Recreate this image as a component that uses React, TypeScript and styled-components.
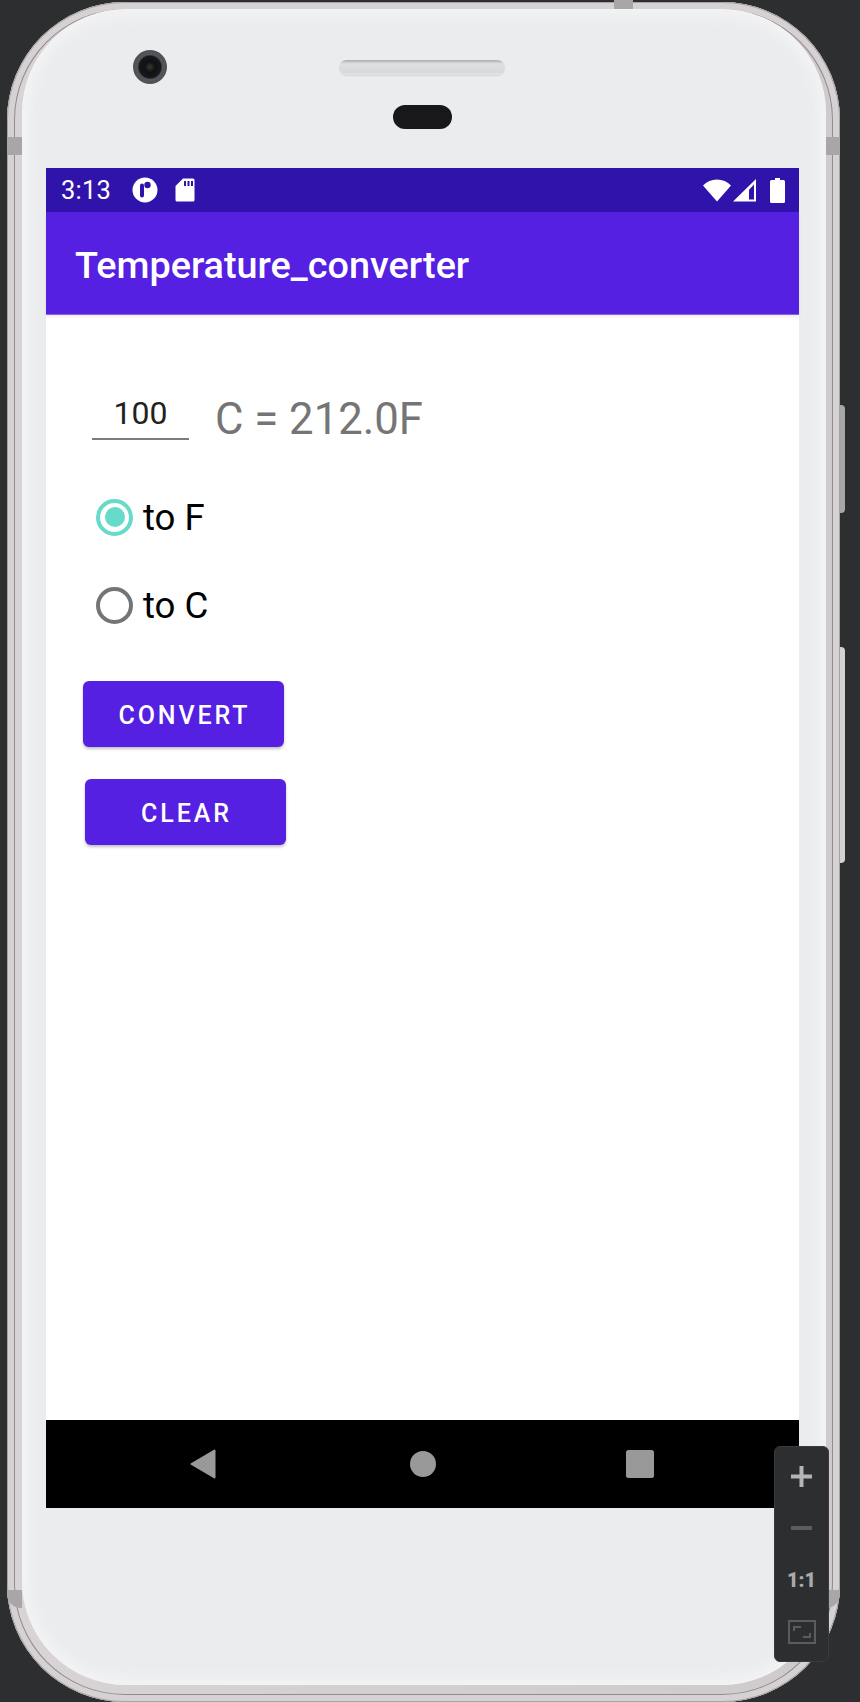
import * as React from "react";
import styled, { createGlobalStyle } from "styled-components";

const GlobalStyle = createGlobalStyle`
  html, body {
    margin: 0;
    padding: 0;
    background: #2d2e30;
    font-family: Roboto, "Liberation Sans", sans-serif;
  }
`;

const Page = styled.div`
  position: relative;
  width: 860px;
  height: 1702px;
  overflow: hidden;
  background: #2d2e30;
  padding: 2px 0 0 7px;
  box-sizing: border-box;
`;

const Device = styled.div`
  position: relative;
  width: 833px;
  height: 1700px;
  box-sizing: border-box;
  padding: 7px 14px 17px 15px;
  border-radius: 118px;
  background: linear-gradient(90deg, #b9b4b6 0, #d8d4d5 1%, #cfcacc 99%, #a9a5a7 100%);
  box-shadow: inset 0 0 0 1px #a7a3a5, inset 0 0 0 7px #d6d2d3, inset 0 0 0 8px #8f8c8e;
`;

const Band = styled.div<{ $side: "left" | "right"; $top: number; $low?: boolean }>`
  position: absolute;
  ${(p) => p.$side}: 0;
  top: ${(p) => p.$top}px;
  width: 15px;
  height: 18px;
  background: #a9a6a8;
  border-radius: ${(p) => (p.$low ? (p.$side === "left" ? "0 0 0 14px" : "0 0 14px 0") : "0")};
`;

const TopBand = styled.div`
  position: absolute;
  left: 607px;
  top: -2px;
  width: 19px;
  height: 9px;
  background: #a9a6a8;
`;

const SideKey = styled.div<{ $top: number; $height: number; $light?: boolean }>`
  position: absolute;
  left: 833px;
  top: ${(p) => p.$top}px;
  width: 5px;
  height: ${(p) => p.$height}px;
  border-radius: 0 4px 4px 0;
  background: ${(p) => (p.$light ? "#d3d1d2" : "#a8a7a8")};
`;

const Bezel = styled.div`
  position: relative;
  height: 100%;
  box-sizing: border-box;
  padding: 0 0 0 24px;
  border-radius: 104px;
  background: #ebecee;
  box-shadow: inset 0 0 16px 5px #f5f5f7;
`;

const TopBezel = styled.div`
  height: 159px;
  display: flex;
  flex-direction: column;
`;

const TopRow = styled.div`
  display: flex;
  align-items: center;
  height: 34px;
  margin-top: 41px;
  padding-left: 87px;
`;

const Camera = styled.div`
  width: 34px;
  height: 34px;
  border-radius: 50%;
  background: radial-gradient(circle at 50% 50%, #3b3a2a 0, #101114 22%, #17181b 45%, #55565a 52%, #45464a 100%);
`;

const Speaker = styled.div`
  width: 166px;
  height: 15px;
  margin-left: 172px;
  border-radius: 8px;
  background: linear-gradient(#a9abae 0, #dfe0e2 25%, #d8d9db 80%, #e3e4e6 100%);
  box-shadow: 0 1px 1px #d5d6d8;
`;

const Sensor = styled.div`
  width: 59px;
  height: 24px;
  margin: 21px 0 0 347px;
  border-radius: 12px;
  background: #18181b;
`;

const Screen = styled.div`
  width: 753px;
  height: 1340px;
  display: flex;
  flex-direction: column;
  background: #fff;
`;

const StatusBar = styled.div`
  height: 44px;
  flex: none;
  display: flex;
  align-items: center;
  padding: 0 14px 0 15px;
  background: #3013aa;
  color: #fff;
`;

const Clock = styled.span`
  font-size: 25.5px;
  width: 71px;
  letter-spacing: 0.2px;
`;

const StatusIcon = styled.svg<{ $gap?: number }>`
  display: block;
  flex: none;
  margin-left: ${(p) => p.$gap ?? 0}px;
`;

const Spring = styled.div`
  flex: 1;
`;

const AppBar = styled.header`
  position: relative;
  height: 103px;
  flex: none;
  display: flex;
  align-items: center;
  padding: 3px 0 0 29px;
  background: #5520e2;
  border-bottom: 1px solid #8a63e8;
  box-sizing: border-box;
  box-shadow: 0 2px 3px rgba(0, 0, 0, 0.08);
  color: #fff;
  font-size: 37.8px;
  font-weight: 500;
`;

const Content = styled.main`
  flex: 1;
  padding: 0 0 0 36px;
`;

const ConvertRow = styled.div`
  display: flex;
  align-items: flex-end;
  height: 125px;
  margin-left: 10px;
`;

const DegreeInput = styled.div`
  width: 97px;
  height: 52px;
  box-sizing: border-box;
  border-bottom: 2px solid #7b7b7b;
  text-align: center;
  color: #222;
  font-size: 32px;
  line-height: 51px;
`;

const Result = styled.div`
  margin-left: 26px;
  color: #757575;
  font-size: 43.7px;
  line-height: 52px;
  height: 52px;
  position: relative;
  top: 5px;
`;

const RadioRow = styled.label<{ $first?: boolean }>`
  display: flex;
  align-items: center;
  height: 44px;
  margin: ${(p) => (p.$first ? "55px" : "44px")} 0 0 14px;
  color: #000;
  font-size: 36.6px;
`;

const RadioMark = styled.span<{ $on?: boolean }>`
  width: 37px;
  height: 37px;
  box-sizing: border-box;
  border-radius: 50%;
  border: 4.5px solid ${(p) => (p.$on ? "#66dbc9" : "#757575")};
  display: flex;
  align-items: center;
  justify-content: center;
  margin-right: 10px;
  &::after {
    content: "";
    display: ${(p) => (p.$on ? "block" : "none")};
    width: 20px;
    height: 20px;
    border-radius: 50%;
    background: #66dbc9;
  }
`;

const ActionButton = styled.button<{ $offset: number; $top: number }>`
  display: block;
  width: 201px;
  height: 66px;
  margin: ${(p) => p.$top}px 0 0 ${(p) => p.$offset}px;
  padding: 3px 0 0 2px;
  border: 0;
  border-radius: 6px;
  background: #5520e2;
  color: #fff;
  font-family: inherit;
  font-size: 25px;
  font-weight: 500;
  letter-spacing: 2.9px;
  box-shadow: 0 2px 3px rgba(0, 0, 0, 0.25);
`;

const NavBar = styled.nav`
  height: 88px;
  flex: none;
  display: flex;
  align-items: center;
  padding-left: 144px;
  background: #000;
`;

const NavIcon = styled.svg<{ $gap?: number }>`
  display: block;
  flex: none;
  margin-left: ${(p) => p.$gap ?? 0}px;
`;

const ZoomPanel = styled.div`
  position: absolute;
  left: 774px;
  top: 1446px;
  width: 55px;
  height: 216px;
  box-sizing: border-box;
  padding-top: 3px;
  display: flex;
  flex-direction: column;
  align-items: center;
  border: 1px solid #3a3b3d;
  border-radius: 6px;
  background: #2d2e30;
`;

const ZoomSlot = styled.div`
  height: 52px;
  display: flex;
  align-items: center;
  justify-content: center;
  color: #aaaaab;
  font-size: 20px;
  font-weight: 900;
  flex: none;
`;

const App = () => (
  <Page>
    <GlobalStyle />
    <Device>
      <Band $side="left" $top={135} />
      <Band $side="right" $top={135} />
      <Band $side="left" $top={1588} $low />
      <Band $side="right" $top={1588} $low />
      <TopBand />
      <SideKey $top={403} $height={108} />
      <SideKey $top={645} $height={216} $light />
      <Bezel>
        <TopBezel>
          <TopRow>
            <Camera />
            <Speaker />
          </TopRow>
          <Sensor />
        </TopBezel>
        <Screen>
          <StatusBar>
            <Clock>3:13</Clock>
            <StatusIcon width="26" height="26" viewBox="0 0 26 26">
              <circle cx="13" cy="13" r="12.5" fill="#fff" />
              <rect x="8" y="6.500" width="4" height="14" rx="2" fill="#3013aa" />
              <circle cx="15.500" cy="8" r="3.200" fill="#3013aa" />
            </StatusIcon>
            <StatusIcon $gap={17} width="20" height="24" viewBox="0 0 20 24">
              <path d="M8 0.500h10a1.500 1.500 0 0 1 1.500 1.500v20a1.500 1.500 0 0 1-1.500 1.500H2A1.500 1.500 0 0 1 .5 22V8z" fill="#fff" />
              <path d="M9 3h2v5H9zM12.500 3h2v5h-2zM16 3h2v5h-2z" fill="#3013aa" />
            </StatusIcon>
            <Spring />
            <StatusIcon width="28" height="23" viewBox="0 0 28 23">
              <path d="M0 6.500C3.600 2.600 8.600 .5 14 .5s10.400 2.100 14 6L14 22.500z" fill="#fff" />
            </StatusIcon>
            <StatusIcon $gap={2} width="23" height="23" viewBox="0 0 23 23">
              <path fillRule="evenodd" d="M23 0v22.500H0zM21 5.500l-5 5.200V20.500h5z" fill="#fff" />
            </StatusIcon>
            <StatusIcon $gap={14} width="15" height="25" viewBox="0 0 15 25">
              <path d="M5 0h5v2h3.500A1.500 1.500 0 0 1 15 3.500V23.500a1.500 1.500 0 0 1-1.500 1.500H1.500A1.500 1.500 0 0 1 0 23.500V3.500A1.500 1.500 0 0 1 1.500 2H5z" fill="#fff" />
            </StatusIcon>
          </StatusBar>
          <AppBar>Temperature_converter</AppBar>
          <Content>
            <ConvertRow>
              <DegreeInput>100</DegreeInput>
              <Result>C = 212.0F</Result>
            </ConvertRow>
            <RadioRow $first>
              <RadioMark $on />
              to F
            </RadioRow>
            <RadioRow>
              <RadioMark />
              to C
            </RadioRow>
            <ActionButton $top={54} $offset={1}>CONVERT</ActionButton>
            <ActionButton $top={32} $offset={3}>CLEAR</ActionButton>
          </Content>
          <NavBar>
            <NavIcon width="26" height="30" viewBox="0 0 26 30">
              <path d="M24.500 1.500v27L1.500 15z" fill="#999" stroke="#999" strokeWidth="2" strokeLinejoin="round" />
            </NavIcon>
            <NavIcon $gap={194} width="26" height="26" viewBox="0 0 26 26">
              <circle cx="13" cy="13" r="13" fill="#999" />
            </NavIcon>
            <NavIcon $gap={190} width="28" height="28" viewBox="0 0 28 28">
              <rect width="28" height="28" rx="2.500" fill="#999" />
            </NavIcon>
          </NavBar>
        </Screen>
      </Bezel>
    </Device>
    <ZoomPanel>
      <ZoomSlot>
        <svg width="21" height="21" viewBox="0 0 21 21">
          <path d="M8.500 0h4v8.500H21v4h-8.500V21h-4v-8.500H0v-4h8.500z" fill="#b4b4b5" />
        </svg>
      </ZoomSlot>
      <ZoomSlot>
        <svg width="21" height="5" viewBox="0 0 21 5">
          <rect width="21" height="4" fill="#5c5c5e" />
        </svg>
      </ZoomSlot>
      <ZoomSlot>1:1</ZoomSlot>
      <ZoomSlot>
        <svg width="28" height="24" viewBox="0 0 28 24" fill="none" stroke="#5c5c5e" strokeWidth="2">
          <rect x="1" y="1" width="26" height="22" />
          <path d="M13 7H6v4M15 17h7v-4" />
        </svg>
      </ZoomSlot>
    </ZoomPanel>
  </Page>
);

export default App;
